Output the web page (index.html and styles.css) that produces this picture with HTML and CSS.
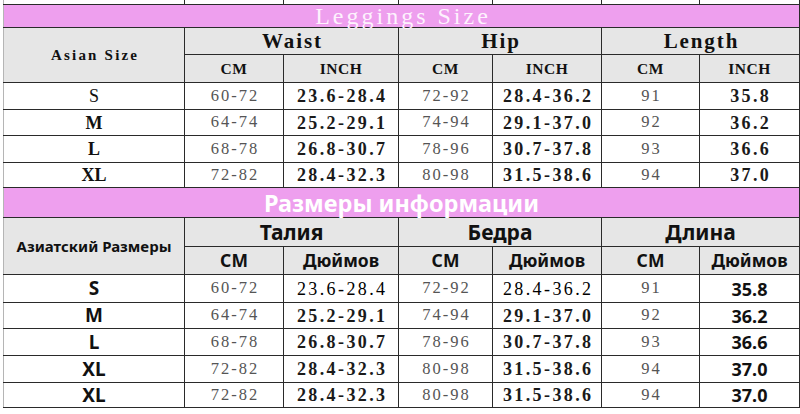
FILE: index.html
```html
<!DOCTYPE html>
<html>
<head>
<meta charset="utf-8">
<link rel="stylesheet" href="styles.css">
</head>
<body>
<div class="sheet">
<table class="grid">
  <colgroup>
    <col class="c-size"><col class="c-cm1"><col class="c-in1"><col class="c-cm2"><col class="c-in2"><col class="c-cm3"><col class="c-in3">
  </colgroup>
  <tr class="strip"><td></td><td></td><td></td><td></td><td></td><td></td><td></td></tr>
  <tr class="band band-en"><td colspan="7">Leggings Size</td></tr>
  <tr class="head h1 en"><td rowspan="2" class="asian">Asian Size</td><td colspan="2">Waist</td><td colspan="2">Hip</td><td colspan="2">Length</td></tr>
  <tr class="head h2 en"><td>CM</td><td>INCH</td><td>CM</td><td>INCH</td><td>CM</td><td>INCH</td></tr>
  <tr class="row r1 en"><td class="sz reg">S</td><td class="cm">60-72</td><td class="in">23.6-28.4</td><td class="cm">72-92</td><td class="in">28.4-36.2</td><td class="cm">91</td><td class="in">35.8</td></tr>
  <tr class="row r2 en"><td class="sz">M</td><td class="cm">64-74</td><td class="in">25.2-29.1</td><td class="cm">74-94</td><td class="in">29.1-37.0</td><td class="cm">92</td><td class="in">36.2</td></tr>
  <tr class="row r3 en"><td class="sz">L</td><td class="cm">68-78</td><td class="in">26.8-30.7</td><td class="cm">78-96</td><td class="in">30.7-37.8</td><td class="cm">93</td><td class="in">36.6</td></tr>
  <tr class="row r4 en"><td class="sz">XL</td><td class="cm">72-82</td><td class="in">28.4-32.3</td><td class="cm">80-98</td><td class="in">31.5-38.6</td><td class="cm">94</td><td class="in">37.0</td></tr>
  <tr class="band band-ru"><td colspan="7">Размеры информации</td></tr>
  <tr class="head h1r ru"><td rowspan="2" class="asian">Азиатский Размеры</td><td colspan="2">Талия</td><td colspan="2">Бедра</td><td colspan="2">Длина</td></tr>
  <tr class="head h2r ru"><td>СМ</td><td>Дюймов</td><td>СМ</td><td>Дюймов</td><td>СМ</td><td>Дюймов</td></tr>
  <tr class="row s1 ru"><td class="sz">S</td><td class="cm">60-72</td><td class="in thin">23.6-28.4</td><td class="cm">72-92</td><td class="in thin">28.4-36.2</td><td class="cm">91</td><td class="inb">35.8</td></tr>
  <tr class="row s2 ru"><td class="sz">M</td><td class="cm">64-74</td><td class="in">25.2-29.1</td><td class="cm">74-94</td><td class="in">29.1-37.0</td><td class="cm">92</td><td class="inb">36.2</td></tr>
  <tr class="row s3 ru"><td class="sz">L</td><td class="cm">68-78</td><td class="in">26.8-30.7</td><td class="cm">78-96</td><td class="in">30.7-37.8</td><td class="cm">93</td><td class="inb">36.6</td></tr>
  <tr class="row s4 ru"><td class="sz">XL</td><td class="cm">72-82</td><td class="in">28.4-32.3</td><td class="cm">80-98</td><td class="in">31.5-38.6</td><td class="cm">94</td><td class="inb">37.0</td></tr>
  <tr class="row s5 ru"><td class="sz">XL</td><td class="cm">72-82</td><td class="in">28.4-32.3</td><td class="cm">80-98</td><td class="in">31.5-38.6</td><td class="cm">94</td><td class="inb">37.0</td></tr>
</table>
</div>
</body>
</html>
```
FILE: styles.css
```css
html, body {
  margin: 0;
  padding: 0;
  background: #ffffff;
}
.sheet {
  width: 800px;
  height: 414px;
  overflow: hidden;
  padding-left: 3px;
  box-sizing: border-box;
  background: #ffffff;
}
.grid {
  border-collapse: collapse;
  table-layout: fixed;
  width: 796px;
}
.c-size { width: 181px; }
.c-cm1 { width: 99px; }
.c-in1 { width: 115px; }
.c-cm2 { width: 94px; }
.c-in2 { width: 109px; }
.c-cm3 { width: 98px; }
.c-in3 { width: 100px; }
.grid td {
  border: 1px solid #2a2a2a;
  padding: 0;
  text-align: center;
  vertical-align: middle;
  line-height: 1;
  white-space: nowrap;
}
.grid td:first-child { border-left-color: #b5b5b5; }
.strip td { border-top: none; height: 4px; }
.band td {
  background: #ee9fee;
  color: #fdf2fd;
}
.band-en td {
  height: 22px;
  line-height: 22px;
  font-family: "Liberation Serif", serif;
  font-size: 24px;
  letter-spacing: 3px;
  padding-left: 3px;
}
.band-ru td {
  height: 29px;
  line-height: 28px;
  font-family: "Noto Sans", "Open Sans", sans-serif;
  font-weight: 700;
  font-size: 23.5px;
  color: #ffffff;
}
.head td { background: #e6e6e6; color: #111; }
.en td { font-family: "Liberation Serif", serif; }
.ru td { font-family: "Noto Sans", "Open Sans", sans-serif; }
.h1 td {
  height: 26px;
  font-size: 21px;
  font-weight: 700;
  letter-spacing: 1.9px;
  padding-left: 1.9px;
}
.h2 td {
  height: 27px;
  font-size: 15.5px;
  font-weight: 700;
  letter-spacing: 0.5px;
}
.en .asian {
  font-size: 15px;
  font-weight: 700;
  letter-spacing: 2.2px;
  padding-left: 2.2px;
}
.h1r td { height: 28px; font-size: 21px; font-weight: 700; }
.h2r td { height: 27px; font-size: 17.5px; font-weight: 700; }
.ru .asian { font-size: 15px; font-weight: 700; letter-spacing: 0; }
.r1 td { height: 26px; }
.r2 td { height: 25px; }
.r3 td { height: 26px; }
.r4 td { height: 24px; }
.s1 td { height: 27px; }
.s2 td { height: 25px; }
.s3 td { height: 26px; }
.s4 td { height: 26px; }
.s5 td { height: 24px; }
.row td { color: #111; }
.row .cm {
  font-family: "Liberation Serif", serif;
  font-size: 16.5px;
  color: #555;
  letter-spacing: 2px;
  padding-left: 2px;
}
.row .in {
  font-family: "Liberation Serif", serif;
  font-size: 18px;
  font-weight: 700;
  color: #1a1a1a;
  letter-spacing: 2.4px;
  padding-left: 2.4px;
}
.row .in.thin { font-weight: 400; color: #000; }
.row .inb {
  font-family: "Noto Sans", "Open Sans", sans-serif;
  font-size: 18px;
  font-weight: 700;
  color: #111;
}
.en .sz { font-size: 18px; font-weight: 700; }
.en .sz.reg { font-weight: 400; }
.ru .sz { font-size: 19px; font-weight: 700; }
```
